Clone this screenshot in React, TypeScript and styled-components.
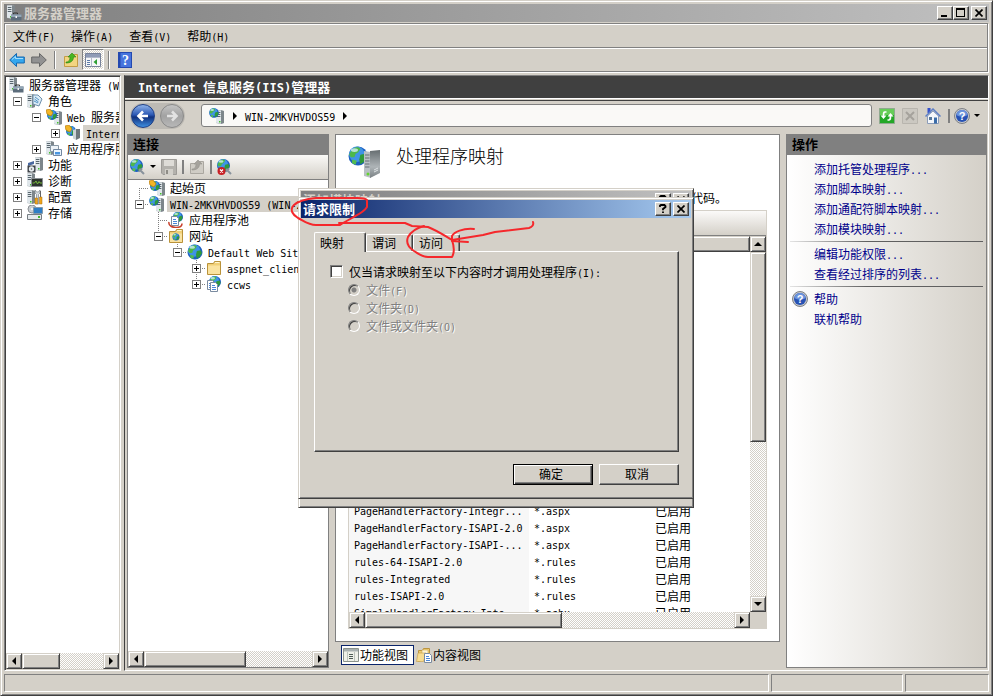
import React from 'react';
import styled, { createGlobalStyle, css } from 'styled-components';

const FACE = '#d4d0c8';
const SHADOW = '#808080';
const DARK = '#404040';

const GlobalStyle = createGlobalStyle`
  * { box-sizing: border-box; }
  html, body { margin: 0; background: ${FACE}; }
  body, button, input, table {
    font-family: "Noto Sans CJK SC", "Noto Sans", sans-serif;
    font-size: 12px;
    line-height: 16px;
    color: #000;
  }
  ul, p, h1, h2 { margin: 0; padding: 0; list-style: none; }
`;

const raised = css`
  border: 1px solid;
  border-color: ${FACE} ${DARK} ${DARK} ${FACE};
  box-shadow: inset 1px 1px #fff, inset -1px -1px ${SHADOW};
`;

/* ---------- text ---------- */

const Latin = styled.span<{ $big?: boolean }>`
  font-family: "DejaVu Sans Mono", "Liberation Mono", monospace;
  font-size: ${(p) => (p.$big ? 12 : 10)}px;
  line-height: 12px;
  white-space: pre;
`;

function Mixed({ children, big }: { children: string; big?: boolean }) {
  const parts = children.split(/([\x20-\x7e]+)/).filter(Boolean);
  return (
    <span>
      {parts.map((part, i) =>
        /^[\x20-\x7e]/.test(part) ? (
          <Latin key={i} $big={big}>{part}</Latin>
        ) : (
          <React.Fragment key={i}>{part}</React.Fragment>
        )
      )}
    </span>
  );
}

/* ---------- icons ---------- */

const Icon = styled.svg`
  flex: none;
  display: block;
`;

const Svg = ({ children, size = 16 }: { children: React.ReactNode; size?: number }) => (
  <Icon width={size} height={size} viewBox="0 0 16 16" aria-hidden="true">{children}</Icon>
);

const Tower = ({ x = 0, y = 0 }: { x?: number; y?: number }) => (
  <g transform={`translate(${x} ${y})`}>
    <path d="M0 .5 5 0l3 1v12l-3 1-5-1z" fill="#9aa3a8" />
    <path d="M0 .5h5v13l-5-.7z" fill="#dfe6ea" />
    <path d="M5 .5 8 1v12l-3 .7z" fill="#7d868b" />
    <path d="M.8 2.5h3.6M.8 4.5h3.6M.8 6.5h3.6" stroke="#59666e" />
    <path d="M3 11h1.5v1.5H3z" fill="#41c02a" />
  </g>
);

const Globe = ({ cx, cy, r }: { cx: number; cy: number; r: number }) => (
  <g transform={`translate(${cx} ${cy}) scale(${r / 8})`}>
    <circle r="8" fill="#1d5fc0" />
    <circle r="6.5" cx="-1" cy="-1.5" fill="#3f93e6" />
    <path d="M-6-4C-4-8 1-8 2-6L0-3-2-2-3 1-6 1-7.5-1z" fill="#4db84a" />
    <path d="M2-1 6-2 7.5 1 5 5 2 7 1 3z" fill="#2f9a3c" />
    <path d="M-5 3-1 4-2 7.4-5 6z" fill="#53bd50" />
    <ellipse cx="-3" cy="-5" rx="3" ry="1.6" fill="#d9f2ff" opacity=".75" />
  </g>
);

const FolderShape = () => (
  <g>
    <path d="M1.5 3.5h6l1-2h6v13h-13z" fill="#f0cf76" stroke="#b9923a" />
    <path d="M2 5.5h12v8.500H2z" fill="#fae3a0" />
    <path d="M9 2.500h4.500" stroke="#fff6d0" />
  </g>
);

const Page = ({ x, y }: { x: number; y: number }) => (
  <g transform={`translate(${x} ${y})`}>
    <path d="M.5.5h5l2 2v7h-7z" fill="#fff" stroke="#7a8ba0" />
    <path d="M2 3.500h3M2 5.500h4M2 7.500h4" stroke="#4a86d8" />
  </g>
);

const IconManager = () => (
  <Svg>
    <Tower x={1} y={0} />
    <path d="M7.500 9.500V8h4v1.500" fill="none" stroke="#333" />
    <path d="M5 9.500h10.500v6H5z" fill="#5c6d7c" />
    <path d="M5 9.500h10.500V12H5z" fill="#93a6b6" />
    <path d="M9.500 11h1.500v2H9.500z" fill="#f4f4f4" />
  </Svg>
);
const IconRoles = () => (
  <Svg>
    <Tower x={0} y={1} />
    <path d="M6 2h5l4 4-3 7-6-2z" fill="#dcebf6" stroke="#6f91ad" />
    <path d="M8 4l4 3M7.500 6l4 3M7 8l4 2" stroke="#5596c6" />
  </Svg>
);
const IconWeb = () => (
  <Svg>
    <Tower x={8} y={2} />
    <Globe cx={6} cy={6} r={5} />
    <path d="M0 1l4-1 3 4-2 3-4-2z" fill="#f2b527" stroke="#b97b0d" strokeWidth=".7" />
  </Svg>
);
const IconIis = () => (
  <Svg>
    <Globe cx={6} cy={6} r={5} />
    <path d="M8 5l3-1v11l-3-1.500z" fill="#ccd3d6" />
    <path d="M11 4h4v9l-4 2z" fill="#6e777c" />
    <path d="M0 1l4-1 3 4-2 3-4-2z" fill="#f2b527" stroke="#b97b0d" strokeWidth=".7" />
  </Svg>
);
const IconAppServer = () => (
  <Svg>
    <Tower x={0} y={0} />
    <path d="M4.500 4.500h8v6h-8z" fill="#eef3f7" stroke="#8797a5" />
    <path d="M7.500 8.500h8v6h-8z" fill="#eef6fd" stroke="#7287a0" />
    <path d="M9 11h5v2.500H9z" fill="#4b96e0" />
  </Svg>
);
const IconFeatures = () => (
  <Svg>
    <Tower x={8} y={0} />
    <path d="M1 6l6-2v3l-6 2z" fill="#4968a0" />
    <path d="M.5 8.500h8v7h-8z" fill="#3d4146" />
    <circle cx="4.500" cy="12" r="2.700" fill="#e7edf0" />
    <circle cx="4.500" cy="12" r=".8" fill="#555" />
  </Svg>
);
const IconDiag = () => (
  <Svg>
    <Tower x={0} y={0} />
    <path d="M4.500 5.500h11v8h-11z" fill="#2c332d" stroke="#8a8f94" />
    <path d="M5.500 10h2l1.500-2 1.500 3 1.500-2.500 1 1.500h2" fill="none" stroke="#76b83c" />
  </Svg>
);
const IconConfig = () => (
  <Svg>
    <Tower x={0} y={1} />
    <path d="M8 1v3l1.500 1.500V15h2V5.500L13 4V1l-1.500 2h-2z" fill="#d8dee2" stroke="#7b8489" strokeWidth=".7" />
    <path d="M8 9h2.500v6H8zM12.500 8H15v7h-2.500z" fill="#efa51c" stroke="#a86d08" strokeWidth=".5" />
    <path d="M13.500 2v6" stroke="#666" />
  </Svg>
);
const IconStorage = () => (
  <Svg>
    <circle cx="5" cy="4" r="4" fill="#c9ced2" stroke="#8a8f94" />
    <circle cx="5" cy="4" r="1" fill="#fff" />
    <path d="M6.500 2.500h9v6h-9z" fill="#2e7dc5" stroke="#8299aa" />
    <path d="M.5 9.500h14v5h-14z" fill="#e5e9ec" stroke="#757d82" />
    <path d="M11 11h2v2h-2z" fill="#45b92e" />
  </Svg>
);
const IconHost = () => (
  <Svg>
    <Tower x={7} y={2} />
    <Globe cx={5} cy={5} r={4.8} />
  </Svg>
);
const IconHandler = () => (
  <Icon width="36" height="36" viewBox="0 0 36 36" aria-hidden="true">
    <Globe cx={10} cy={11} r={9.500} />
    <path d="M16 6l7 1v26l-7-2z" fill="#b9c0c4" />
    <path d="M22 6l10-1v23l-10 5z" fill="url(#tower)" />
    <path d="M17 10h4.500M17 13h4.500M17 16h4.500M17 19h4.500M17 22h4.500" stroke="#667177" />
    <circle cx="20" cy="29" r="1.500" fill="#64d431" />
    <path d="M26 25l4-2M26 27l4-2" stroke="#dde1e3" />
    <defs>
      <linearGradient id="tower" x2="0" y2="1">
        <stop stopColor="#666d70" /><stop offset=".6" stopColor="#aeb4b7" /><stop offset="1" stopColor="#7a8184" />
      </linearGradient>
    </defs>
  </Icon>
);
const IconPool = () => (
  <Svg>
    <Globe cx={10} cy={5} r={5} />
    <Page x={3} y={4} />
    <path d="M1 10c-1 4 4 5.500 7 5.500s6-1 6-4" fill="none" stroke="#c8402c" strokeWidth="1.500" />
  </Svg>
);
const IconSites = () => (
  <Svg><FolderShape /><Globe cx={8} cy={9} r={3.500} /></Svg>
);
const IconSite = () => <Svg><Globe cx={8} cy={8} r={7.500} /></Svg>;
const IconFolder = () => <Svg><FolderShape /></Svg>;
const IconApp = () => (
  <Svg><Globe cx={9} cy={6} r={6} /><Page x={1} y={4} /><Page x={4} y={6} /></Svg>
);
const IconArrow = ({ gray, right }: { gray?: boolean; right?: boolean }) => (
  <Svg>
    <path
      d="M.7 8 7.500 1.500V5h7.800v6H7.500v3.500z"
      transform={right ? 'rotate(180 8 8)' : undefined}
      fill={gray ? '#929292' : '#35a7ee'}
      stroke={gray ? '#666' : '#1668b0'}
    />
    {!gray && <path d="M3 7.500l3.500-3v2h7.500" fill="none" stroke="#a4defc" />}
  </Svg>
);
const IconUp = ({ gray }: { gray?: boolean }) => (
  <Svg>
    <path d="M1.500 4.500h8l1-2h4v12h-13z" fill={gray ? '#cfccc5' : '#f3d581'} stroke={gray ? '#aaa7a0' : '#c39c46'} />
    <path d="M3 10c3 0 4-2 4-5H5l4-4 4 4h-2.500c0 4-3 6-7.500 6z" fill={gray ? '#a5a29c' : '#48b521'} stroke={gray ? '#96938d' : '#2b8512'} strokeWidth=".6" />
  </Svg>
);
const IconPane = () => (
  <Svg>
    <path d="M.5 1.500h15v13H.5z" fill="#f6f7f9" stroke="#77829a" />
    <path d="M1 2h14v3H1z" fill="#8f9bb6" />
    <path d="M1 5.500h14M6.500 5.500v9" stroke="#b2bacb" />
    <path d="M2 8.500h3M2 10.500h3M2 12.500h3" stroke="#5c7ba8" />
    <path d="M12 7v6L8.500 10z" fill="#2f9f33" />
  </Svg>
);
const IconBook = () => (
  <Svg>
    <path d="M1 0h14v16H1z" fill="#2449b0" />
    <path d="M3.500 1H14v14H3.500z" fill="#4774dd" />
    <text x="8.500" y="13" textAnchor="middle" fontFamily="Liberation Serif, serif" fontWeight="bold" fontSize="14" fill="#fff">?</text>
  </Svg>
);
const IconHelp = () => (
  <Svg>
    <circle cx="8" cy="8" r="7.500" fill="#c6c8cb" stroke="#7e8186" />
    <circle cx="8" cy="8" r="6" fill="#2752b4" />
    <path d="M2.500 7a5.500 5 0 0 1 11 0c-3 2-8 2-11 0z" fill="#6c93dc" />
    <text x="8" y="12" textAnchor="middle" fontFamily="Liberation Sans, sans-serif" fontWeight="bold" fontSize="11" fill="#fff">?</text>
  </Svg>
);
const IconRefresh = () => (
  <Svg>
    <path d="M.5.500h15v15H.5z" fill="#23a726" stroke="#8fa98f" />
    <path d="M1 1h14v6H1z" fill="#66cd58" />
    <path d="M7.500 4H6C4.500 4 4.500 5 4.500 8M8.500 12H10c1.500 0 1.500-1 1.500-4" fill="none" stroke="#fff" strokeWidth="1.600" />
    <path d="M1.500 7.500h6l-3 3.500zM8.500 8.500h6l-3-3.500z" fill="#fff" />
  </Svg>
);
const IconStop = () => (
  <Svg>
    <path d="M.5.500h15v15H.5z" fill="#cbc8c1" stroke="#b8b5ae" />
    <path d="M4 4l8 8M12 4l-8 8" stroke="#a5a29c" strokeWidth="2" />
  </Svg>
);
const IconHome = () => (
  <Svg>
    <path d="M2.500 0h3v5h-3z" fill="#3450cc" />
    <path d="M2.500 8v7.500h11V8L8 3z" fill="#f3f6fa" stroke="#8b9cb8" />
    <path d="M.5 8.500 8 1l7.500 7.500" fill="none" stroke="#5d7fc6" strokeWidth="1.500" />
    <path d="M9 9.500h3v6H9z" fill="#3b6ca8" />
    <path d="M4 9h3v3H4z" fill="#57779a" />
  </Svg>
);
const IconConnect = ({ remove }: { remove?: boolean }) => (
  <Svg>
    <Globe cx={6.500} cy={6.500} r={6.500} />
    <path d="M9 10l5 5M12 9.500l-3 3" stroke="#88939c" strokeWidth="2" />
    {remove && (
      <g>
        <circle cx="4.500" cy="12" r="4" fill="#c81f24" />
        <path d="M3 10.500l3 3M6 10.500l-3 3" stroke="#fff" strokeWidth="1.300" />
      </g>
    )}
  </Svg>
);
const IconSave = () => (
  <Svg>
    <path d="M.5.500h15v15H2L.5 14z" fill="#b3b1ac" stroke="#9d9b97" />
    <path d="M3 1h10v6H3z" fill="#dedcd7" />
    <path d="M4 10h8v6H4z" fill="#d2d0ca" />
    <path d="M5 11h2v4H5z" fill="#8f8d87" />
  </Svg>
);
const IconFeatureView = () => (
  <Svg>
    <path d="M.5 1.500h15v13H.5z" fill="#eef0e8" stroke="#8a928c" />
    <path d="M1 2h14v2.500H1z" fill="#a8b0b0" />
    <path d="M4.500 5v9M11.500 5v9" stroke="#bcc2bb" />
    <path d="M6 7.500h4M6 9.500h4M6 11.500h4" stroke="#4d5b55" />
  </Svg>
);
const IconContentView = () => (
  <Svg>
    <path d="M2.500 3.500h4l1-2h6v9l-11 4z" fill="#f1cd70" stroke="#bb9440" />
    <path d="M6 3h6v7H6z" fill="#fff6d6" stroke="#c9aa5c" strokeWidth=".6" />
    <path d="M2 6h8l-2.500 8.500H.5z" fill="#f8dd92" stroke="#c39c46" strokeWidth=".6" />
    <Page x={8} y={6} />
  </Svg>
);

const Glyph = styled.svg`
  display: block;
`;
const GlyphArrow = ({ dir }: { dir: 'left' | 'right' | 'up' | 'down' }) => {
  const d = { left: 'M6 0v8L2 4z', right: 'M2 0v8l4-4z', up: 'M0 6h8L4 2z', down: 'M0 2h8L4 6z' }[dir];
  return <Glyph width="8" height="8" viewBox="0 0 8 8"><path d={d} /></Glyph>;
};
const GlyphCaret = () => (
  <Glyph width="6" height="4" viewBox="0 0 6 4"><path d="M0 0h6L3 3z" /></Glyph>
);
const GlyphCross = () => (
  <Glyph width="8" height="8" viewBox="0 0 8 8"><path d="M.5.500l7 7M7.500.500l-7 7" stroke="#000" strokeWidth="1.700" /></Glyph>
);
const GlyphMin = () => (
  <Glyph width="8" height="8" viewBox="0 0 8 8"><path d="M0 6h6v2H0z" /></Glyph>
);
const GlyphMax = () => (
  <Glyph width="9" height="9" viewBox="0 0 9 9"><path d="M0 0h9v9H0zM1 2v6h7V2z" fillRule="evenodd" /></Glyph>
);
const GlyphHelp = () => (
  <Glyph width="8" height="9" viewBox="0 0 8 9">
    <path d="M1 3V1.500L2 1h3.500l1 1v1L4 5v1.200M4 7.500V9" fill="none" stroke="#000" strokeWidth="1.800" />
  </Glyph>
);

/* ---------- window frame ---------- */

const Frame = styled.div`
  position: relative;
  display: flex;
  flex-direction: column;
  min-height: 100vh;
  padding: 3px;
  background: ${FACE};
  overflow: hidden;
  ${raised}
`;

const TitleBar = styled.header<{ $active?: boolean }>`
  display: flex;
  align-items: center;
  flex: none;
  height: 18px;
  padding: 0 2px;
  color: ${(p) => (p.$active ? '#fff' : FACE)};
  background: ${(p) =>
    p.$active ? 'linear-gradient(90deg, #0a246a, #a6caf0)' : 'linear-gradient(90deg, #808080, #c0c0c0)'};
`;
const Caption = styled.h1`
  flex: 1;
  font-size: 13px;
  font-weight: bold;
  white-space: nowrap;
  svg + & { margin-left: 2px; }
`;
const CaptionButton = styled.button<{ $gap?: boolean }>`
  display: flex;
  align-items: center;
  justify-content: center;
  width: 16px;
  height: 14px;
  padding: 0 1px 1px 0;
  margin-left: ${(p) => (p.$gap ? 2 : 0)}px;
  background: ${FACE};
  border: 1px solid;
  border-color: #fff ${DARK} ${DARK} #fff;
  box-shadow: inset -1px -1px ${SHADOW};
`;

const Rebar = styled.div`
  margin: 1px 1px 3px 0;
  border: 1px solid ${SHADOW};
  box-shadow: inset 1px 1px #fff, 1px 1px #fff;
`;
const MenuBar = styled.nav`
  display: flex;
  height: 24px;
  padding: 0 2px;
  border-bottom: 1px solid ${SHADOW};
`;
const MenuItem = styled.button`
  border: 0;
  padding: 0 8px 0 6px;
  margin-right: 2px;
  background: none;
  white-space: nowrap;
`;
const ToolBar = styled.div`
  display: flex;
  align-items: center;
  height: 23px;
  padding-left: 1px;
  box-shadow: inset 1px 1px #fff;
`;
const ToolButton = styled.button<{ $pressed?: boolean }>`
  display: flex;
  align-items: center;
  justify-content: center;
  height: 21px;
  padding: 0 2px;
  border: 1px solid transparent;
  background: none;
  ${(p) =>
    p.$pressed &&
    css`
      border-color: ${SHADOW} #fff #fff ${SHADOW};
      background: repeating-conic-gradient(#fff 0 25%, ${FACE} 0 50%) 0 0 / 2px 2px;
    `}
`;
const Separator = styled.span<{ $single?: boolean }>`
  width: 2px;
  height: ${(p) => (p.$single ? 14 : 18)}px;
  margin: 0 ${(p) => (p.$single ? 0 : 4)}px;
  border-left: 1px solid ${SHADOW};
  border-right: 1px solid ${(p) => (p.$single ? SHADOW : '#fff')};
`;

const Body = styled.div`
  display: flex;
  flex: 1;
  gap: 3px;
  min-height: 0;
`;
const StatusBar = styled.footer`
  display: grid;
  grid-template-columns: 1fr 132px 84px;
  gap: 2px;
  height: 18px;
  margin-top: 3px;
`;
const StatusCell = styled.div`
  border: 1px solid;
  border-color: ${SHADOW} #fff #fff ${SHADOW};
`;

/* ---------- scroll bars ---------- */

const Scroll = styled.div<{ $vertical?: boolean }>`
  display: flex;
  flex: none;
  flex-direction: ${(p) => (p.$vertical ? 'column' : 'row')};
  ${(p) => (p.$vertical ? 'width' : 'height')}: 16px;
  background: repeating-conic-gradient(#fff 0 25%, ${FACE} 0 50%) 0 0 / 2px 2px;
`;
const ScrollButton = styled.button`
  display: flex;
  align-items: center;
  justify-content: center;
  flex: none;
  width: 16px;
  height: 16px;
  padding: 0;
  background: ${FACE};
  ${raised}
`;
const Thumb = styled.div<{ $share: number }>`
  flex: ${(p) => p.$share} 0 0;
  background: ${FACE};
  ${raised}
`;
const Rest = styled.div<{ $share: number }>`
  flex: ${(p) => p.$share} 0 0;
`;

function ScrollBar({ vertical, share }: { vertical?: boolean; share: number }) {
  return (
    <Scroll $vertical={vertical}>
      <ScrollButton aria-label="后退"><GlyphArrow dir={vertical ? 'up' : 'left'} /></ScrollButton>
      <Thumb $share={share} />
      <Rest $share={100 - share} />
      <ScrollButton aria-label="前进"><GlyphArrow dir={vertical ? 'down' : 'right'} /></ScrollButton>
    </Scroll>
  );
}

/* ---------- trees ---------- */

const TreeList = styled.ul`
  flex: 1;
  min-height: 0;
  overflow: hidden;
`;
const TreeRow = styled.li`
  display: flex;
  align-items: center;
  height: 16px;
  padding-left: 2px;
  white-space: nowrap;
`;
const dotsV = `repeating-linear-gradient(${SHADOW} 0 1px, transparent 1px 2px)`;
const dotsH = `repeating-linear-gradient(90deg, ${SHADOW} 0 1px, transparent 1px 2px)`;
const Cell = styled.span<{ $lines?: string }>`
  display: flex;
  align-items: center;
  justify-content: center;
  flex: none;
  width: 19px;
  height: 16px;
  ${(p) => {
    const l = p.$lines || '';
    const layers: string[] = [];
    if (l.includes('t')) layers.push(`${dotsV} 9px 0 / 1px 8px no-repeat`);
    if (l.includes('b')) layers.push(`${dotsV} 9px 8px / 1px 8px no-repeat`);
    if (l.includes('r')) layers.push(`${dotsH} 9px 8px / 10px 1px no-repeat`);
    return layers.length ? `background: ${layers.join(', ')};` : '';
  }}
`;
const Toggle = styled.button`
  width: 9px;
  height: 9px;
  padding: 0;
  border: 1px solid ${SHADOW};
  background: #fff;
`;
const TreeLabel = styled.span<{ $selected?: boolean }>`
  margin-left: 2px;
  padding: 0 3px;
  flex: ${(p) => (p.$selected ? 1 : 'none')};
  background: ${(p) => (p.$selected ? FACE : 'none')};
`;

function Expander({ open }: { open: boolean }) {
  return (
    <Toggle aria-label={open ? '折叠' : '展开'}>
      <Glyph width="7" height="7" viewBox="0 0 7 7">
        <path d={open ? 'M1 3h5v1H1z' : 'M1 3h5v1H1zM3 1h1v5H3z'} />
      </Glyph>
    </Toggle>
  );
}

type Node = {
  text: string;
  icon: React.ReactNode;
  cells: string[];
  open?: boolean;
  selected?: boolean;
};

function Tree({ nodes }: { nodes: Node[] }) {
  return (
    <TreeList>
      {nodes.map((n) => (
        <TreeRow key={n.text}>
          {n.cells.map((lines, i) => (
            <Cell key={i} $lines={lines}>
              {i === n.cells.length - 1 && n.open !== undefined && <Expander open={n.open} />}
            </Cell>
          ))}
          {n.icon}
          <TreeLabel $selected={n.selected}><Mixed>{n.text}</Mixed></TreeLabel>
        </TreeRow>
      ))}
    </TreeList>
  );
}

const managerNodes: Node[] = [
  { text: '服务器管理器 (WIN-2MKVHVDOS59)', icon: <IconManager />, cells: [] },
  { text: '角色', icon: <IconRoles />, cells: [''], open: true },
  { text: 'Web 服务器(IIS)', icon: <IconWeb />, cells: ['', ''], open: true },
  { text: 'Internet 信息服务', icon: <IconIis />, cells: ['', '', ''], open: false, selected: true },
  { text: '应用程序服务器', icon: <IconAppServer />, cells: ['', ''], open: false },
  { text: '功能', icon: <IconFeatures />, cells: [''], open: false },
  { text: '诊断', icon: <IconDiag />, cells: [''], open: false },
  { text: '配置', icon: <IconConfig />, cells: [''], open: false },
  { text: '存储', icon: <IconStorage />, cells: [''], open: false },
];

const siteNodes: Node[] = [
  { text: '起始页', icon: <IconWeb />, cells: ['br'] },
  { text: 'WIN-2MKVHVDOS59 (WIN-2MKVHVDOS59)', icon: <IconHost />, cells: ['tr'], open: true, selected: true },
  { text: '应用程序池', icon: <IconPool />, cells: ['', 'tbr'] },
  { text: '网站', icon: <IconSites />, cells: ['', 'tr'], open: true },
  { text: 'Default Web Site', icon: <IconSite />, cells: ['', '', 'tr'], open: true },
  { text: 'aspnet_client', icon: <IconFolder />, cells: ['', '', '', 'tbr'], open: false },
  { text: 'ccws', icon: <IconApp />, cells: ['', '', '', 'tr'], open: false },
];

const SidePane = styled.aside`
  display: flex;
  flex-direction: column;
  flex: none;
  width: 117px;
  padding: 1px;
  background: #fff;
  border: 1px solid;
  border-color: ${SHADOW} #fff #fff ${SHADOW};
  box-shadow: inset 1px 1px ${DARK}, inset -1px -1px ${FACE};
`;

/* ---------- IIS workspace ---------- */

const Workspace = styled.main`
  display: flex;
  flex-direction: column;
  flex: 1;
  min-width: 0;
  border: 1px solid;
  border-color: ${SHADOW} #fff #fff ${DARK};
`;
const Banner = styled.h2`
  height: 22px;
  padding: 3px 13px;
  background: ${DARK};
  color: #fff;
  font-size: 13px;
  white-space: nowrap;
`;
const BannerRule = styled.div`
  height: 3px;
  border-top: 1px solid #fff;
  border-bottom: 1px solid ${DARK};
`;
const NavRow = styled.div`
  display: flex;
  align-items: center;
  height: 33px;
  padding: 0 8px 4px 5px;
  gap: 7px;
`;
const RoundNav = styled.div`
  display: flex;
  gap: 5px;
  padding: 1px;
  margin-right: 9px;
  border-radius: 14px;
  background: #bdbab4;
`;
const RoundButton = styled.button<{ $on?: boolean }>`
  display: flex;
  align-items: center;
  justify-content: center;
  width: 24px;
  height: 24px;
  padding: 0;
  border-radius: 50%;
  border: 1px solid ${(p) => (p.$on ? '#1f3f86' : '#8a8a8a')};
  background: ${(p) =>
    p.$on
      ? 'linear-gradient(#8fb2e8, #2a57b4 45%, #10307e 55%, #3f8fe0)'
      : 'linear-gradient(#c4c4c4, #a2a2a2 50%, #b8b8b8)'};
`;
const Address = styled.div`
  display: flex;
  align-items: center;
  flex: 1;
  height: 23px;
  gap: 6px;
  padding: 0 7px;
  border: 1px solid ${SHADOW};
  border-radius: 3px;
  background: #faf9f7;
`;
const NavTools = styled.div`
  display: flex;
  align-items: center;
  gap: 7px;
`;
const IconButton = styled.button`
  display: flex;
  align-items: center;
  gap: 4px;
  padding: 0;
  border: 0;
  background: none;
`;
const Columns = styled.div`
  display: flex;
  flex: 1;
  gap: 6px;
  min-height: 0;
  padding: 0 1px 2px 2px;
`;
const Pane = styled.section<{ $width: number }>`
  display: flex;
  flex-direction: column;
  flex: none;
  width: ${(p) => p.$width}px;
  border: 1px solid ${SHADOW};
  background: #fff;
`;
const PaneTitle = styled.h2`
  height: 20px;
  padding: 1px 5px;
  background: ${SHADOW};
  font-size: 13px;
`;
const PaneTools = styled.div`
  display: flex;
  align-items: center;
  height: 25px;
  padding-left: 2px;
  gap: 5px;
  border-bottom: 1px solid ${SHADOW};
  background: linear-gradient(#faf9f7, ${FACE});
`;
const Center = styled.section`
  display: flex;
  flex-direction: column;
  flex: 1;
  min-width: 0;
`;
const Feature = styled.div`
  display: flex;
  flex-direction: column;
  flex: 1;
  min-height: 0;
  padding: 10px 12px 12px;
  background: #fff;
  border: 1px solid ${SHADOW};
`;
const FeatureHead = styled.div`
  display: flex;
  gap: 12px;
  height: 45px;
`;
const FeatureTitle = styled.h2`
  font-size: 18px;
  line-height: 20px;
  font-weight: 300;
`;
const FeatureNote = styled.p`
  height: 20px;
  padding-right: 40px;
  text-align: right;
`;
const ListBox = styled.div`
  display: flex;
  flex-direction: column;
  flex: 1;
  min-height: 0;
  border: 1px solid ${FACE};
`;
const FilterBar = styled.div`
  height: 25px;
  border-bottom: 1px solid ${SHADOW};
  background: linear-gradient(#fbfaf9, ${FACE});
`;
const ListArea = styled.div`
  display: flex;
  flex: 1;
  min-height: 0;
`;
const ListMain = styled.div`
  display: flex;
  flex-direction: column;
  flex: 1;
  min-width: 0;
`;
const ListHeader = styled.div`
  height: 16px;
  background: ${FACE};
  ${raised}
`;
const RowsArea = styled.div`
  display: flex;
  flex-direction: column;
  justify-content: flex-end;
  flex: 1 1 0;
  min-height: 0;
  overflow: hidden;
`;
const RowsTable = styled.table`
  width: 100%;
  flex: none;
  margin-bottom: -9px;
  border-collapse: collapse;
  table-layout: fixed;
`;
const RowCell = styled.td<{ $width?: number }>`
  width: ${(p) => (p.$width ? `${p.$width}px` : 'auto')};
  height: 17px;
  padding: 0 5px;
  line-height: 14px;
  vertical-align: middle;
  white-space: nowrap;
  &:first-child { background: #f7f7f7; }
`;
const ListFoot = styled.div`
  display: grid;
  grid-template-columns: 1fr 16px;
  background: ${FACE};
`;
const ViewTabs = styled.div`
  display: flex;
  padding: 3px 6px;
`;
const ViewTab = styled.button<{ $on?: boolean }>`
  display: flex;
  align-items: center;
  gap: 1px;
  height: 20px;
  padding: 0 5px 0 1px;
  border: 1px solid ${(p) => (p.$on ? '#0a246a' : 'transparent')};
  background: ${(p) => (p.$on ? '#fff' : 'none')};
  white-space: nowrap;
`;

const handlers = [
  ['PageHandlerFactory-Integr...', '*.aspx', '已启用'],
  ['PageHandlerFactory-ISAPI-2.0', '*.aspx', '已启用'],
  ['PageHandlerFactory-ISAPI-...', '*.aspx', '已启用'],
  ['rules-64-ISAPI-2.0', '*.rules', '已启用'],
  ['rules-Integrated', '*.rules', '已启用'],
  ['rules-ISAPI-2.0', '*.rules', '已启用'],
  ['SimpleHandlerFactory-Inte...', '*.ashx', '已启用'],
];

const ActionList = styled.div`
  flex: 1;
  padding: 4px 0;
  background: linear-gradient(90deg, #fff, ${FACE});
`;
const ActionLink = styled.a`
  display: flex;
  align-items: center;
  height: 20px;
  padding-left: 5px;
  gap: 6px;
  color: #00008b;
  text-decoration: none;
  white-space: nowrap;
`;
const IconSlot = styled.span`
  width: 16px;
  height: 16px;
`;
const ActionRule = styled.div`
  height: 5px;
  padding: 2px 3px;
  &::before {
    content: '';
    display: block;
    height: 1px;
    background: linear-gradient(90deg, #e4e4e4, #606060 40%);
  }
`;

const actionGroups: { text: string; icon?: React.ReactNode }[][] = [
  [{ text: '添加托管处理程序...' }, { text: '添加脚本映射...' }, { text: '添加通配符脚本映射...' }, { text: '添加模块映射...' }],
  [{ text: '编辑功能权限...' }, { text: '查看经过排序的列表...' }],
  [{ text: '帮助', icon: <IconHelp /> }, { text: '联机帮助' }],
];

/* ---------- dialogs ---------- */

const Dialog = styled.section<{ $top: number; $height: number }>`
  position: absolute;
  left: 297px;
  top: ${(p) => p.$top}px;
  width: 396px;
  height: ${(p) => p.$height}px;
  padding: 2px;
  background: ${FACE};
  ${raised}
`;
const DialogBody = styled.div`
  padding: 14px 12px 0 13px;
`;
const TabStrip = styled.div`
  display: flex;
  align-items: flex-end;
`;
const Tab = styled.button<{ $on?: boolean }>`
  position: relative;
  height: ${(p) => (p.$on ? 20 : 17)}px;
  width: ${(p) => (p.$on ? 52 : 47)}px;
  margin-bottom: ${(p) => (p.$on ? -1 : 0)}px;
  padding: 0 5px;
  background: ${FACE};
  border: 1px solid;
  border-color: #fff ${DARK} transparent #fff;
  border-bottom: 0;
  border-radius: 2px 2px 0 0;
  box-shadow: inset -1px 0 ${SHADOW};
  text-align: left;
`;
const TabPanel = styled.div`
  height: 201px;
  padding: 10px 15px;
  border: 1px solid;
  border-color: #fff ${DARK} ${DARK} #fff;
  box-shadow: inset -1px -1px ${SHADOW};
`;
const Option = styled.label<{ $sub?: boolean }>`
  display: flex;
  align-items: center;
  gap: 6px;
  height: ${(p) => (p.$sub ? 18 : 19)}px;
  padding-left: ${(p) => (p.$sub ? 18 : 0)}px;
  color: ${(p) => (p.$sub ? SHADOW : '#000')};
  text-shadow: ${(p) => (p.$sub ? '1px 1px #fff' : 'none')};
  white-space: nowrap;
`;
const Check = styled.input`
  appearance: none;
  width: 13px;
  height: 13px;
  margin: 0;
  background: #fff;
  border: 1px solid;
  border-color: ${SHADOW} #fff #fff ${SHADOW};
  box-shadow: inset 1px 1px ${DARK}, inset -1px -1px ${FACE};
`;
const Radio = styled.input`
  appearance: none;
  width: 12px;
  height: 12px;
  margin: 0;
  border: 1px solid;
  border-color: ${SHADOW} #fff #fff ${SHADOW};
  border-radius: 50%;
  box-shadow: inset 1px 1px ${DARK};
  background: ${FACE};
  &:checked { background: radial-gradient(circle, ${SHADOW} 2px, ${FACE} 3px); }
`;
const DialogButtons = styled.div`
  display: flex;
  justify-content: flex-end;
  gap: 6px;
  margin-top: 12px;
`;
const PushButton = styled.button<{ $default?: boolean }>`
  width: 80px;
  height: 21px;
  padding: 0 4px 1px 0;
  background: ${FACE};
  border: 1px solid;
  border-color: ${(p) => (p.$default ? '#000' : `#fff ${DARK} ${DARK} #fff`)};
  box-shadow: ${(p) =>
    p.$default
      ? `inset 1px 1px #fff, inset -1px -1px ${DARK}, inset -2px -2px ${SHADOW}`
      : `inset -1px -1px ${SHADOW}`};
`;
const Marks = styled.svg`
  position: absolute;
  left: 285px;
  top: 190px;
  pointer-events: none;
`;

export default function App() {
  return (
    <>
      <GlobalStyle />
      <Frame>
        <TitleBar>
          <IconManager />
          <Caption>服务器管理器</Caption>
          <CaptionButton aria-label="最小化"><GlyphMin /></CaptionButton>
          <CaptionButton aria-label="最大化"><GlyphMax /></CaptionButton>
          <CaptionButton $gap aria-label="关闭"><GlyphCross /></CaptionButton>
        </TitleBar>

        <Rebar>
          <MenuBar>
            {['文件(F)', '操作(A)', '查看(V)', '帮助(H)'].map((m) => (
              <MenuItem key={m}><Mixed>{m}</Mixed></MenuItem>
            ))}
          </MenuBar>
          <ToolBar>
            <ToolButton aria-label="后退"><IconArrow /></ToolButton>
            <ToolButton aria-label="前进"><IconArrow gray right /></ToolButton>
            <Separator />
            <ToolButton aria-label="向上"><IconUp /></ToolButton>
            <ToolButton $pressed aria-label="显示控制台树"><IconPane /></ToolButton>
            <Separator />
            <ToolButton aria-label="帮助"><IconBook /></ToolButton>
          </ToolBar>
        </Rebar>

        <Body>
          <SidePane>
            <Tree nodes={managerNodes} />
            <ScrollBar share={45} />
          </SidePane>

          <Workspace>
            <Banner><Mixed big>Internet 信息服务(IIS)管理器</Mixed></Banner>
            <BannerRule />
            <NavRow>
              <RoundNav>
                <RoundButton $on aria-label="后退">
                  <Svg><path d="M13 8H4M8 3.500 3.500 8 8 12.500" fill="none" stroke="#fff" strokeWidth="2.600" /></Svg>
                </RoundButton>
                <RoundButton aria-label="前进">
                  <Svg><path d="M3 8h9M8 3.500 12.500 8 8 12.500" fill="none" stroke="#e2e2e2" strokeWidth="2.600" /></Svg>
                </RoundButton>
              </RoundNav>
              <Address>
                <IconHost />
                <GlyphArrow dir="right" />
                <Mixed>WIN-2MKVHVDOS59</Mixed>
                <GlyphArrow dir="right" />
              </Address>
              <NavTools>
                <IconButton aria-label="刷新"><IconRefresh /></IconButton>
                <IconButton aria-label="停止"><IconStop /></IconButton>
                <IconButton aria-label="主页"><IconHome /></IconButton>
                <IconButton aria-label="帮助">
                  <Separator $single />
                  <IconHelp />
                  <GlyphCaret />
                </IconButton>
              </NavTools>
            </NavRow>

            <Columns>
              <Pane $width={202}>
                <PaneTitle>连接</PaneTitle>
                <PaneTools>
                  <IconButton aria-label="连接">
                    <IconConnect />
                    <GlyphCaret />
                  </IconButton>
                  <IconButton aria-label="保存"><IconSave /></IconButton>
                  <Separator $single />
                  <IconButton aria-label="向上"><IconUp gray /></IconButton>
                  <Separator $single />
                  <IconButton aria-label="断开"><IconConnect remove /></IconButton>
                </PaneTools>
                <Tree nodes={siteNodes} />
                <ScrollBar share={60} />
              </Pane>

              <Center>
                <Feature>
                  <FeatureHead>
                    <IconHandler />
                    <FeatureTitle>处理程序映射</FeatureTitle>
                  </FeatureHead>
                  <FeatureNote>代码。</FeatureNote>
                  <ListBox>
                    <FilterBar />
                    <ListArea>
                      <ListMain>
                        <ListHeader />
                        <RowsArea>
                          <RowsTable>
                            <tbody>
                              {handlers.map((r) => (
                                <tr key={r[0]}>
                                  <RowCell $width={180}><Mixed>{r[0]}</Mixed></RowCell>
                                  <RowCell $width={121}><Mixed>{r[1]}</Mixed></RowCell>
                                  <RowCell>{r[2]}</RowCell>
                                </tr>
                              ))}
                            </tbody>
                          </RowsTable>
                        </RowsArea>
                      </ListMain>
                      <ScrollBar vertical share={55} />
                    </ListArea>
                    <ListFoot>
                      <ScrollBar share={53} />
                    </ListFoot>
                  </ListBox>
                </Feature>
                <ViewTabs>
                  <ViewTab $on><IconFeatureView />功能视图</ViewTab>
                  <ViewTab><IconContentView />内容视图</ViewTab>
                </ViewTabs>
              </Center>

              <Pane $width={201}>
                <PaneTitle>操作</PaneTitle>
                <ActionList>
                  {actionGroups.map((group, g) => (
                    <React.Fragment key={g}>
                      {g > 0 && <ActionRule />}
                      {group.map((a) => (
                        <ActionLink key={a.text} href="#">
                          {a.icon || <IconSlot />}
                          <Mixed>{a.text}</Mixed>
                        </ActionLink>
                      ))}
                    </React.Fragment>
                  ))}
                </ActionList>
              </Pane>
            </Columns>
          </Workspace>
        </Body>

        <StatusBar>
          <StatusCell />
          <StatusCell />
          <StatusCell />
        </StatusBar>

        <Dialog $top={187} $height={320} aria-label="添加模块映射">
          <TitleBar>
            <Caption>添加模块映射</Caption>
            <CaptionButton aria-label="帮助"><GlyphHelp /></CaptionButton>
            <CaptionButton $gap aria-label="关闭"><GlyphCross /></CaptionButton>
          </TitleBar>
        </Dialog>

        <Dialog $top={196} $height={302} role="dialog" aria-label="请求限制">
          <TitleBar $active>
            <Caption>请求限制</Caption>
            <CaptionButton aria-label="帮助"><GlyphHelp /></CaptionButton>
            <CaptionButton $gap aria-label="关闭"><GlyphCross /></CaptionButton>
          </TitleBar>
          <DialogBody>
            <TabStrip role="tablist">
              <Tab $on role="tab">映射</Tab>
              <Tab role="tab">谓词</Tab>
              <Tab role="tab">访问</Tab>
            </TabStrip>
            <TabPanel>
              <Option>
                <Check type="checkbox" />
                <Mixed>仅当请求映射至以下内容时才调用处理程序(I):</Mixed>
              </Option>
              <Option $sub><Radio type="radio" name="kind" disabled defaultChecked /><Mixed>文件(F)</Mixed></Option>
              <Option $sub><Radio type="radio" name="kind" disabled /><Mixed>文件夹(D)</Mixed></Option>
              <Option $sub><Radio type="radio" name="kind" disabled /><Mixed>文件或文件夹(O)</Mixed></Option>
            </TabPanel>
            <DialogButtons>
              <PushButton $default>确定</PushButton>
              <PushButton>取消</PushButton>
            </DialogButtons>
          </DialogBody>
        </Dialog>

        <Marks width="255" height="75" viewBox="286 191 255 75" aria-hidden="true">
          <g fill="none" stroke="#f5282c" strokeWidth="2" strokeLinecap="round" strokeLinejoin="round">
            <path d="M367 200C364 197 358 198 352 198H316C306 199 298 201 294 205C289 210 293 215 298 218C304 221 308 225 316 225H340L343 223L352 218C359 214 364 212 367 207V201" />
            <path d="M339 223H405L412 226L428 227C438 231 445 236 452 240" />
            <path d="M424 226C416 228 411 232 408 237C406 242 408 247 414 251C419 254 422 257 428 257H452C455 252 454 246 452 240" />
            <path d="M533 222C534 225 532 227 529 228L495 232L483 235L452 240M474 229C463 228 454 232 452 236V241L468 242" />
          </g>
        </Marks>
      </Frame>
    </>
  );
}
